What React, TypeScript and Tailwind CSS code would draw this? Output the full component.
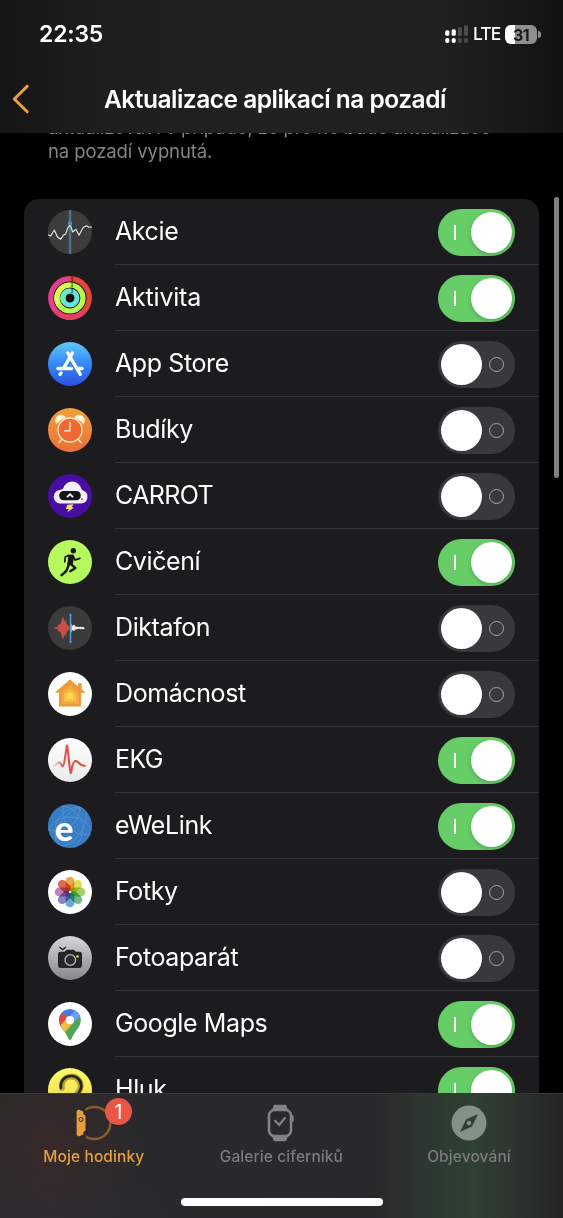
import { useState } from "react";
import type { ReactNode } from "react";

type AppItem = {
    name: string;
    icon: ReactNode;
    enabled: boolean;
    tracking: string;
};

/* ICONS */

function StocksIcon() {
    return (
        <>
            <circle cx="22" cy="22" r="22" fill="#3c3c3d" />
            <rect x="20.7" y="0" width="2.6" height="44" fill="#4c7283" />
            <path
                d="M0 24.7L2.7 26L6.3 20L9.5 27L12.7 29.3L15.3 25.3L17.7 24L20 17.3L22.3 15L24.7 22L28 19.3L31 25.3L35.3 17.3L38.7 15.7L41 17.3L44 17"
                fill="none"
                stroke="#e8e8e8"
                strokeWidth="1.1"
                strokeLinejoin="round"
            />
            <circle cx="22" cy="13.4" r="2.1" fill="#3f8fdc" />
        </>
    );
}

function ActivityIcon() {
    return (
        <>
            <circle cx="22" cy="22" r="22" fill="#111" />
            <path d="M22 2.8A19.2 19.2 0 0 0 22 41.2" fill="none" stroke="#e2408c" strokeWidth="5.4" />
            <path d="M22 2.8A19.2 19.2 0 0 1 22 41.2" fill="none" stroke="#e3453c" strokeWidth="5.4" />
            <path d="M8.4 35.6A19.2 19.2 0 0 0 35.6 35.6" fill="none" stroke="#e53f66" strokeWidth="5.4" />
            <circle cx="22" cy="22" r="13" fill="none" stroke="#b9f84e" strokeWidth="5.2" />
            <path d="M22 9A13 13 0 0 0 11 29" fill="none" stroke="#d9f954" strokeWidth="5.2" />
            <circle cx="22" cy="22" r="7" fill="none" stroke="#69e3df" strokeWidth="5" />
            <path d="M22 15A7 7 0 0 0 16 26" fill="none" stroke="#66ecbf" strokeWidth="5" />
            <path d="M24.2 0.5V5.5M24.2 6.8V11.6M24.2 13V17" stroke="#000" strokeOpacity="0.4" strokeWidth="1.8" />
        </>
    );
}

function AppStoreIcon() {
    return (
        <>
            <defs>
                <linearGradient id="store" x1="0" y1="0" x2="0" y2="1">
                    <stop offset="0" stopColor="#62c9f8" />
                    <stop offset="0.45" stopColor="#388cf5" />
                    <stop offset="1" stopColor="#2a52e4" />
                </linearGradient>
            </defs>
            <circle cx="22" cy="22" r="22" fill="url(#store)" />
            <g fill="none" stroke="#fff" strokeWidth="3.4" strokeLinecap="round">
                <path d="M24.4 11L15.8 25.8" />
                <path d="M19.8 11L32.3 32.3" />
                <path d="M10 26.5H23.5" />
                <path d="M29.8 26.5H34" />
                <path d="M13 31L12 32.4" />
            </g>
        </>
    );
}

function AlarmsIcon() {
    return (
        <>
            <defs>
                <linearGradient id="alarm" x1="0" y1="0" x2="0" y2="1">
                    <stop offset="0" stopColor="#f0a03b" />
                    <stop offset="1" stopColor="#ec7038" />
                </linearGradient>
            </defs>
            <circle cx="22" cy="22" r="22" fill="url(#alarm)" />
            <circle cx="22" cy="22" r="12" fill="#f16932" stroke="#fdecc4" strokeWidth="1.3" />
            <path
                d="M22 14.3V22.8H16.5M13.8 31.3L11 34.5M30.2 31.3L33 34.5"
                fill="none"
                stroke="#fdecc4"
                strokeWidth="1.4"
                strokeLinecap="round"
            />
            <path d="M8.7 15.6A5.2 5.2 0 0 1 17.3 9.4Q11.5 11.3 8.7 15.6Z" fill="#fff8df" stroke="#fff8df" strokeLinejoin="round" />
            <path d="M35.3 15.6A5.2 5.2 0 0 0 26.7 9.4Q32.5 11.3 35.3 15.6Z" fill="#fff8df" stroke="#fff8df" strokeLinejoin="round" />
        </>
    );
}

function CarrotIcon() {
    return (
        <>
            <circle cx="22" cy="22" r="22" fill="#480ea3" />
            <path
                d="M12 29.6A6.9 6.9 0 0 1 11.6 15.9Q14.5 15.4 15.2 14.5A9.3 9.3 0 0 1 33.2 14.4Q33.7 15.6 35 16.4A6.8 6.8 0 0 1 33 29.6Z"
                fill="#f5eefc"
            />
            <rect x="11.2" y="17" width="21.6" height="9.2" rx="4.4" fill="#171519" />
            <path d="M19 23.2L22 20.2L25 23.2" fill="none" stroke="#fff" strokeWidth="1.8" />
            <circle cx="34" cy="25.3" r="1" fill="#e53c64" />
            <path d="M19.5 30.7L25.5 30.3L23.7 33.2L26 33.6L19.2 38.3L20.9 35L17.8 35Z" fill="#f5e17b" />
        </>
    );
}

function WorkoutIcon() {
    return (
        <>
            <circle cx="22" cy="22" r="22" fill="#b7fa60" />
            <circle cx="25.3" cy="10.8" r="2.7" fill="#15190d" />
            <path d="M19.8 14.7L24.9 14.4L26.2 16.5L24.6 25L19.2 25L20.3 16.6Z" fill="#15190d" />
            <g fill="none" stroke="#15190d" strokeLinecap="round" strokeLinejoin="round">
                <path d="M20.5 15.5L17.2 17L16.8 21.8" strokeWidth="1.7" />
                <path d="M25 15.8L27.2 20L31.8 18.3" strokeWidth="1.8" />
                <path d="M21 24.4L18.3 31L13.4 35.3" strokeWidth="2.4" />
                <path d="M22.6 23.8L27.4 28L22.3 31.2" strokeWidth="2.4" />
            </g>
        </>
    );
}

function VoiceIcon() {
    return (
        <>
            <circle cx="22" cy="22" r="22" fill="#3b3b3c" />
            <path
                d="M5.5 22L8 21L9.5 21L10 19L11.5 18L12 19L13.2 16L14 13L14.7 10.5L15.7 12L16.5 16L17.5 13L18.3 17L19.5 19L21.5 20.5V23.5L19.5 25L18.3 27L17.5 31L16.5 28L15.7 32L14.7 33.5L14 31L13.2 28L12 25L11.5 26L10 25L9.5 23L8 23Z"
                fill="#c94f44"
            />
            <path d="M23.3 17.5L24.5 20L26 18.5L27.5 20.5L31 21L32.5 20.7L34 21.3L35 20.8L37 22.3L35 23.5L34 22.8L32.5 23.3L31 22.8L27.5 23.5L26 25L24.5 24L23.3 27Z" fill="#eee" />
            <path d="M22.5 9V36" stroke="#4c9ddd" strokeWidth="1.5" />
            <circle cx="22.5" cy="9" r="1.2" fill="#4c9ddd" />
            <circle cx="22.5" cy="36" r="1.2" fill="#4c9ddd" />
        </>
    );
}

function HomeIcon() {
    return (
        <>
            <circle cx="22" cy="22" r="22" fill="#fff" />
            <path
                d="M22 7.5L30 14.2V11.3H33.7V17.2L37 20V20.8H33V34.5H11V20.8H7.5V20Z"
                fill="#ed9a37"
            />
            <path d="M22 13L30.5 20V32H13.5V20Z" fill="#f1aa3d" />
            <path d="M22 16.8L28 21.7V29.5H16V21.7Z" fill="#f6bf45" />
            <path d="M22 20L25 22.5V27H19V22.5Z" fill="#fadb56" />
        </>
    );
}

function EcgIcon() {
    return (
        <>
            <defs>
                <linearGradient id="ecg" gradientUnits="userSpaceOnUse" x1="5" y1="0" x2="37" y2="0">
                    <stop offset="0" stopColor="#e8a9a9" stopOpacity="0.3" />
                    <stop offset="0.3" stopColor="#e45555" />
                    <stop offset="1" stopColor="#e04c33" />
                </linearGradient>
                <linearGradient id="ecgbg" x1="0" y1="0" x2="0" y2="1">
                    <stop offset="0" stopColor="#fff" />
                    <stop offset="1" stopColor="#eaeaeb" />
                </linearGradient>
            </defs>
            <circle cx="22" cy="22" r="22" fill="url(#ecgbg)" />
            <path
                d="M5.5 27.7C9 27.5 9 24.2 11.2 24.2C13.5 24.2 13 28.6 14.6 28.4C16.8 28 17.6 13 19 7.5C20.7 13.5 21 29.5 22.7 35.2C24.2 32 23.8 23.5 27.6 23C31.3 23 30.5 28 36.8 27.7"
                fill="none"
                stroke="url(#ecg)"
                strokeWidth="2.1"
                strokeLinecap="round"
                strokeLinejoin="round"
            />
        </>
    );
}

function EwelinkIcon() {
    return (
        <>
            <defs>
                <clipPath id="ewclip">
                    <circle cx="22" cy="22" r="22" />
                </clipPath>
            </defs>
            <circle cx="22" cy="22" r="22" fill="#377dc5" />
            <g clipPath="url(#ewclip)" fill="none" stroke="#5896d2" strokeWidth="0.8">
                <circle cx="12" cy="25" r="23" />
                <circle cx="31" cy="27" r="24" />
                <circle cx="22" cy="38" r="25" />
                <circle cx="38" cy="8" r="23" />
                <circle cx="8" cy="3" r="24" />
                <ellipse cx="23" cy="23" rx="11" ry="22" transform="rotate(35 23 23)" />
            </g>
            <text x="6.7" y="36.5" fill="#fff" fontFamily="Lato, sans-serif" fontSize="35" fontWeight="900">
                e
            </text>
        </>
    );
}

const petals = ["#eaa03c", "#dfdd3f", "#9bcb58", "#5eb982", "#62a1d6", "#8077bd", "#bd79b2", "#dd5947"];

function PhotosIcon() {
    return (
        <>
            <circle cx="22" cy="22" r="22" fill="#fff" />
            <g className="isolate">
                {petals.map((color, i) => (
                    <rect
                        key={color}
                        x="17.6"
                        y="6.7"
                        width="8.8"
                        height="14.6"
                        rx="4.4"
                        fill={color}
                        fillOpacity="0.92"
                        transform={`rotate(${i * 45} 22 22)`}
                        className="mix-blend-multiply"
                    />
                ))}
            </g>
            <circle cx="22" cy="22" r="1" fill="#fff" />
        </>
    );
}

function CameraIcon() {
    return (
        <>
            <defs>
                <linearGradient id="camera" x1="0" y1="0" x2="0" y2="1">
                    <stop offset="0" stopColor="#d6d5da" />
                    <stop offset="1" stopColor="#87868c" />
                </linearGradient>
            </defs>
            <circle cx="22" cy="22" r="22" fill="url(#camera)" />
            <path d="M11.3 11L14.7 13.6L18 11" fill="none" stroke="#252527" strokeWidth="1.3" />
            <path
                d="M12.5 15.8H16.5L18.7 13.7H25.7L28 15.8H31.5Q34 15.8 34 18.3V29.6Q34 32 31.5 32H12.5Q10 32 10 29.6V18.3Q10 15.8 12.5 15.8Z"
                fill="#252527"
            />
            <circle cx="22.3" cy="24" r="5.3" fill="#2b2b2d" stroke="#b8b7bb" strokeWidth="1.3" />
            <circle cx="29.5" cy="20.5" r="1.3" fill="#eedd3d" />
        </>
    );
}

function MapsIcon() {
    return (
        <>
            <defs>
                <clipPath id="pin">
                    <path d="M22 7.2C28 7.2 32.8 12 32.8 17.8C32.8 26 26.5 28.5 23.8 36.5Q22 40 20.2 36.5C17.5 28.5 11.2 26 11.2 17.8C11.2 12 16 7.2 22 7.2Z" />
                </clipPath>
            </defs>
            <circle cx="22" cy="22" r="22" fill="#fff" />
            <g clipPath="url(#pin)">
                <rect width="44" height="44" fill="#4fa856" />
                <path d="M10 28L22 14L32 4H10Z" fill="#3c7bea" />
                <path d="M22 14L30 5L34 12L25 21Z" fill="#6e9ff0" />
                <path d="M9 10.5L14 10.5L22 17L13 28L8 24Z" fill="#d94c3d" />
                <path d="M11 25.2L18.5 16.5L25.7 20.5L15.7 31.5Z" fill="#f2bd43" />
            </g>
            <circle cx="22" cy="18" r="4.1" fill="#fff" />
        </>
    );
}

function NoiseIcon() {
    return (
        <>
            <defs>
                <linearGradient id="noise" x1="0" y1="0" x2="0" y2="1">
                    <stop offset="0" stopColor="#fcfb70" />
                    <stop offset="1" stopColor="#f3d33a" />
                </linearGradient>
            </defs>
            <circle cx="22" cy="22" r="22" fill="url(#noise)" />
            <path d="M14 20C11.5 5 34 5 32.7 19C32 25 27 26 26.5 31" fill="none" stroke="#b2a638" strokeWidth="6" strokeLinecap="round" />
            <path d="M13 20C11 4.2 34.5 4.2 33.2 19C32.5 25 28 26 27.5 31" fill="none" stroke="#25240f" strokeWidth="2.7" strokeLinecap="round" />
        </>
    );
}

const apps: AppItem[] = [
    { name: "Akcie", icon: <StocksIcon />, enabled: true, tracking: "tracking-[-0.4px]" },
    { name: "Aktivita", icon: <ActivityIcon />, enabled: true, tracking: "tracking-[-0.2px]" },
    { name: "App Store", icon: <AppStoreIcon />, enabled: false, tracking: "tracking-[-0.4px]" },
    { name: "Budíky", icon: <AlarmsIcon />, enabled: false, tracking: "tracking-[-0.4px]" },
    { name: "CARROT", icon: <CarrotIcon />, enabled: false, tracking: "tracking-[-0.6px]" },
    { name: "Cvičení", icon: <WorkoutIcon />, enabled: true, tracking: "tracking-[-0.4px]" },
    { name: "Diktafon", icon: <VoiceIcon />, enabled: false, tracking: "tracking-[-0.4px]" },
    { name: "Domácnost", icon: <HomeIcon />, enabled: false, tracking: "tracking-[-0.4px]" },
    { name: "EKG", icon: <EcgIcon />, enabled: true, tracking: "tracking-[-0.6px]" },
    { name: "eWeLink", icon: <EwelinkIcon />, enabled: true, tracking: "tracking-[-0.4px]" },
    { name: "Fotky", icon: <PhotosIcon />, enabled: false, tracking: "tracking-[-0.4px]" },
    { name: "Fotoaparát", icon: <CameraIcon />, enabled: false, tracking: "tracking-[-0.4px]" },
    { name: "Google Maps", icon: <MapsIcon />, enabled: true, tracking: "tracking-[-0.4px]" },
    { name: "Hluk", icon: <NoiseIcon />, enabled: true, tracking: "tracking-[-0.4px]" },
];

function Toggle({ on, label, onChange }: { on: boolean; label: string; onChange: () => void }) {
    return (
        <button
            type="button"
            role="switch"
            aria-checked={on}
            aria-label={label}
            onClick={onChange}
            className={`mr-6 flex h-[47px] w-[77px] shrink-0 items-center justify-between rounded-full px-[3px] ${
                on ? "bg-[#67ce67]" : "bg-[#39393d]"
            }`}
        >
            {on ? (
                <>
                    <span className="ml-[13px] h-[15px] w-0.5 bg-white" />
                    <span className="size-[41px] rounded-full bg-white shadow-[0_2px_5px_rgba(0,0,0,0.2)]" />
                </>
            ) : (
                <>
                    <span className="size-[41px] rounded-full bg-white" />
                    <span className="mr-2 size-[15px] rounded-full border-[1.5px] border-[#a5a5a8]" />
                </>
            )}
        </button>
    );
}

function StatusIcons() {
    return (
        <div className="flex items-center">
            <svg width="24" height="19" viewBox="0 0 24 19">
                <g fill="#fff">
                    <rect x="1.2" y="5.2" width="4.2" height="5.6" rx="1.6" />
                    <rect x="7.6" y="4.2" width="4.2" height="6.6" rx="1.6" />
                    <rect x="1.2" y="13" width="4.2" height="5" rx="2" />
                    <rect x="7.6" y="13" width="4.2" height="5" rx="2" />
                </g>
                <g fill="#4c4c4d">
                    <rect x="13.9" y="2" width="4" height="9" rx="1.6" />
                    <rect x="20" y="0.2" width="4" height="10.6" rx="1.6" />
                    <rect x="13.9" y="13" width="4" height="5" rx="2" />
                    <rect x="20" y="13" width="4" height="5" rx="2" />
                </g>
            </svg>
            <span className="ml-[5px] w-[27px] text-[17.5px] font-medium tracking-[-0.9px] text-white">LTE</span>
            <div className="ml-[5px] flex h-[19px] w-8 items-center justify-center rounded-[6px] bg-[linear-gradient(90deg,#fff_31%,#8f8f8f_31%)] text-[16px] font-bold tracking-[-0.5px] text-[#1b1b1b]">
                31
            </div>
            <span className="ml-px h-[7px] w-[3px] rounded-r-full bg-[#8f8f8f]" />
        </div>
    );
}

function TabItem({ label, active, children }: { label: string; active?: boolean; children: ReactNode }) {
    return (
        <div className={`flex w-[187.6px] flex-col items-center pt-[9px] ${active ? "text-[#e69f3f]" : "text-[#7b7b7d]"}`}>
            <div className="relative flex h-10 items-center justify-center">{children}</div>
            <span className="mt-[2px] text-[15.5px] leading-6 font-medium tracking-[0.1px] whitespace-nowrap">{label}</span>
        </div>
    );
}

export default function App() {
    const [enabled, setEnabled] = useState(apps.map((app) => app.enabled));

    const toggle = (index: number) => {
        setEnabled(enabled.map((value, i) => (i === index ? !value : value)));
    };

    return (
        <div className="flex h-[1218px] w-[563px] flex-col overflow-hidden bg-black font-[Inter,sans-serif] text-white">

            {/* HEADER */}

            <header className="h-[133px] shrink-0 bg-[linear-gradient(90deg,#151516_0%,#1e1e1f_18%,#212122_50%,#1f1f20_80%,#131314_100%)]">
                <div className="flex h-[69px] items-center justify-between pr-[22px] pl-[39px]">
                    <span className="text-[23px] font-semibold tracking-[-0.2px]">22:35</span>
                    <StatusIcons />
                </div>
                <div className="flex h-[60px] items-center">
                    <svg width="18" height="30" viewBox="0 0 18 30" className="ml-3 shrink-0">
                        <path d="M15.2 2.2L2.3 15L15.2 27.8" fill="none" stroke="#eba042" strokeWidth="3" strokeLinecap="round" strokeLinejoin="round" />
                    </svg>
                    <h1 className="ml-[74px] text-[24.5px] font-semibold tracking-[-0.5px] whitespace-nowrap">
                        Aktualizace aplikací na pozadí
                    </h1>
                </div>
            </header>

            {/* LIST */}

            <main className="relative h-[960px] shrink-0 overflow-hidden">
                <p className="-mt-[17px] ml-12 h-[83px] text-[18.5px] leading-[23.5px] tracking-[-0.1px] whitespace-nowrap text-[#848488]">
                    aktualizovat i v případě, že pro ně bude aktualizace
                    <br />
                    na pozadí vypnutá.
                </p>
                <ul className="mx-6 rounded-t-[15px] bg-[#1c1c1e]">
                    {apps.map((app, i) => (
                        <li key={app.name} className="flex h-[66px] items-center pl-6">
                            <svg width="44" height="44" viewBox="0 0 44 44" className="shrink-0">
                                {app.icon}
                            </svg>
                            <div className="ml-[23px] flex h-full flex-1 items-center justify-between border-b border-[#343437] pt-px">
                                <span className={`text-[25px] ${app.tracking}`}>{app.name}</span>
                                <Toggle on={enabled[i]} label={app.name} onChange={() => toggle(i)} />
                            </div>
                        </li>
                    ))}
                </ul>
                <div className="absolute top-16 right-1 h-[281px] w-[5px] rounded-full bg-[#818181]" />
            </main>

            {/* TAB BAR */}

            <nav className="h-[125px] shrink-0 border-t border-[#38383a] bg-[radial-gradient(ellipse_90px_110px_at_50px_55px,#38292a,transparent),radial-gradient(ellipse_130px_60px_at_50px_125px,#292c36,transparent),linear-gradient(90deg,#2b2a28_0%,#2a2a2c_20%,#29292b_66%,#2c372f_76%,#2f4132_84%,#2d352e_91%,#222423_100%)]">
                <div className="flex h-[101px]">
                    <TabItem label="Moje hodinky" active>
                        <svg width="36" height="38" viewBox="0 0 36 38">
                            <circle cx="18.3" cy="19" r="16" fill="none" stroke="#855d2d" strokeWidth="2.6" />
                            <path d="M1.2 6L8 5.8V8.5L10 11V27L8 29.5V32.2L1.2 32L0.5 28V10Z" fill="#29292a" stroke="#29292a" strokeWidth="3" />
                            <path d="M2.3 5.5L7.3 7.6V10L9.5 11.7V26.5L7.3 28.3V30.5L2.3 32.6L0.6 30.8V7.3Z" fill="#e69f3f" />
                            <circle cx="5" cy="15.5" r="2" fill="#e69f3f" stroke="#30291f" strokeWidth="1" />
                        </svg>
                        <span className="absolute -top-[5px] left-[29px] flex size-[27px] items-center justify-center rounded-full bg-[#eb5545] text-[20px] text-white">
                            1
                        </span>
                    </TabItem>
                    <TabItem label="Galerie ciferníků">
                        <svg width="28" height="38" viewBox="0 0 28 38">
                            <path d="M7 0.7H19L21 6H5ZM5 32H21L19 37.3H7Z" fill="#838385" />
                            <rect x="2" y="6" width="22" height="26" rx="5.5" fill="#29292b" stroke="#838385" strokeWidth="2.6" />
                            <rect x="24" y="11.5" width="2.7" height="6.5" rx="1.2" fill="#838385" />
                            <path d="M8 16.7L12.2 20.8L18 14" fill="none" stroke="#838385" strokeWidth="2.2" strokeLinecap="round" />
                        </svg>
                    </TabItem>
                    <TabItem label="Objevování">
                        <svg width="36" height="36" viewBox="0 0 36 36">
                            <circle cx="18" cy="18" r="17.5" fill="#859086" />
                            <path d="M27 9L21 21.5L9 27L15 14.5Z" fill="#2f4132" />
                            <circle cx="18" cy="18" r="2.2" fill="#859086" />
                        </svg>
                    </TabItem>
                </div>
                <div className="mx-auto h-2 w-[202px] rounded-full bg-white mt-[3px]" />
            </nav>

        </div>
    );
}
